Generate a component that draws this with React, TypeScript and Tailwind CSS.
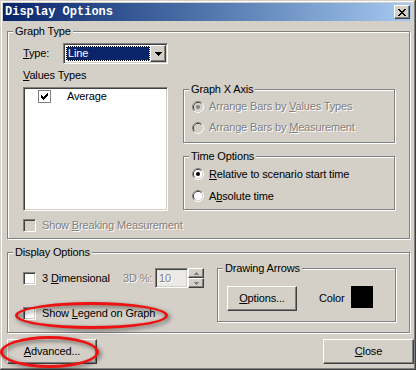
import React from "react";

const CHECK: [number, number][] = [
  [6, 0], [5, 1], [6, 1], [0, 2], [4, 2], [5, 2], [6, 2], [0, 3], [1, 3], [3, 3], [4, 3], [5, 3],
  [0, 4], [1, 4], [2, 4], [3, 4], [4, 4], [1, 5], [2, 5], [3, 5], [2, 6],
];

const XMARK: [number, number][] = [
  [0, 0], [1, 0], [6, 0], [7, 0], [1, 1], [2, 1], [5, 1], [6, 1], [2, 2], [3, 2], [4, 2], [5, 2],
  [3, 3], [4, 3], [2, 4], [3, 4], [4, 4], [5, 4], [1, 5], [2, 5], [5, 5], [6, 5], [0, 6], [1, 6], [6, 6], [7, 6],
];

function Pixels({ pts, w, h, color }: { pts: [number, number][]; w: number; h: number; color: string }) {
  return (
    <svg width={w} height={h} shapeRendering="crispEdges" className="block">
      {pts.map(([x, y], i) => (
        <rect key={i} x={x} y={y} width="1" height="1" fill={color} />
      ))}
    </svg>
  );
}

function CheckBox({ checked, disabled, flat }: { checked?: boolean; disabled?: boolean; flat?: boolean }) {
  const cls = flat
    ? "border border-[#808080] bg-white"
    : `border border-t-[#808080] border-l-[#808080] border-r-white border-b-white shadow-[inset_1px_1px_0_#404040,inset_-1px_-1px_0_#d4d0c8] ${
        disabled ? "bg-[#d4d0c8]" : "bg-white"
      }`;
  return (
    <div className={`w-[13px] h-[13px] shrink-0 flex items-center justify-center ${cls}`}>
      {checked && <Pixels pts={CHECK} w={7} h={7} color="#000" />}
    </div>
  );
}

function Radio({ checked, disabled }: { checked?: boolean; disabled?: boolean }) {
  const fill = disabled ? "#d4d0c8" : "#ffffff";
  const dot = disabled ? "#808080" : "#000000";
  return (
    <svg width="12" height="12" className="block shrink-0">
      <path d="M2.11 9.89 A5.5 5.5 0 0 1 9.89 2.11" stroke="#808080" fill="none" />
      <path d="M9.89 2.11 A5.5 5.5 0 0 1 2.11 9.89" stroke="#ffffff" fill="none" />
      <path d="M2.82 9.18 A4.5 4.5 0 0 1 9.18 2.82" stroke="#404040" fill="none" />
      <path d="M9.18 2.82 A4.5 4.5 0 0 1 2.82 9.18" stroke="#d4d0c8" fill="none" />
      <circle cx="6" cy="6" r="4" fill={fill} />
      {checked && <circle cx="6" cy="6" r="2" fill={dot} />}
    </svg>
  );
}

function GroupBox({
  label,
  className,
  children,
}: {
  label: string;
  className: string;
  children?: React.ReactNode;
}) {
  return (
    <div
      className={`relative border border-[#808080] shadow-[1px_1px_0_#fff,inset_1px_1px_0_#fff] ${className}`}
    >
      <span className="absolute -top-[7px] left-[5px] px-[2px] bg-[#d4d0c8] leading-[13px] whitespace-nowrap">
        {label}
      </span>
      {children}
    </div>
  );
}

const raised =
  "border border-t-white border-l-white border-r-[#404040] border-b-[#404040] shadow-[inset_-1px_-1px_0_#808080] bg-[#d4d0c8]";
const sunken =
  "border border-t-[#808080] border-l-[#808080] border-r-white border-b-white shadow-[inset_1px_1px_0_#404040,inset_-1px_-1px_0_#d4d0c8]";

const disabledText = "text-[#808080] text-shadow-[1px_1px_0_#fff]";

function Button({ children, className }: { children: React.ReactNode; className: string }) {
  return <div className={`flex items-center justify-center ${raised} ${className}`}>{children}</div>;
}

function Tri({ up, color }: { up?: boolean; color: string }) {
  return (
    <svg width="5" height="3" className="block" shapeRendering="crispEdges">
      {up ? (
        <>
          <rect x="2" y="0" width="1" height="1" fill={color} />
          <rect x="1" y="1" width="3" height="1" fill={color} />
          <rect x="0" y="2" width="5" height="1" fill={color} />
        </>
      ) : (
        <>
          <rect x="0" y="0" width="5" height="1" fill={color} />
          <rect x="1" y="1" width="3" height="1" fill={color} />
          <rect x="2" y="2" width="1" height="1" fill={color} />
        </>
      )}
    </svg>
  );
}

export default function App() {
  return (
    <div className="w-[416px] h-[370px] relative overflow-hidden bg-[#d4d0c8] text-black font-['Liberation_Sans',Arial,sans-serif] text-[11px] leading-[13px] tracking-[-0.15px] shadow-[inset_-1px_-1px_0_#404040,inset_1px_1px_0_#d4d0c8,inset_-2px_-2px_0_#808080,inset_2px_2px_0_#fff]">
      {/* Title bar */}
      <div className="mt-[3px] ml-[3px] w-[408px] h-[18px] flex items-center justify-between pl-[2px] bg-gradient-to-r from-[#0a246a] to-[#a6caf0]">
        <span className="font-['Liberation_Mono',monospace] font-bold text-[12px] tracking-normal text-white leading-[14px]">
          Display Options
        </span>
        <div className={`w-[16px] h-[14px] mr-[1px] flex items-center justify-center ${raised}`}>
          <Pixels pts={XMARK} w={8} h={7} color="#000" />
        </div>
      </div>

      {/* Graph Type */}
      <GroupBox label="Graph Type" className="mt-[10px] ml-[7px] w-[403px] h-[208px] pl-[15px] pt-[11px]">
        <div className="flex items-center h-[21px]">
          <span className="w-[40px]">
            <u>T</u>ype:
          </span>
          <div className={`w-[105px] h-[21px] bg-white flex items-start justify-between ${sunken}`}>
            <div className="ml-[2px] mt-[2px] w-[84px] h-[15px] bg-black border border-dotted border-[#fff]">
              <div className="w-full h-full bg-[#0a246a] text-white pl-[1px] leading-[13px]">Line</div>
            </div>
            <div className={`w-[16px] h-[17px] mt-[1px] mr-[1px] flex items-center justify-center ${raised}`}>
              <svg width="7" height="4" className="block" shapeRendering="crispEdges">
                <rect x="0" y="0" width="7" height="1" fill="#000" />
                <rect x="1" y="1" width="5" height="1" fill="#000" />
                <rect x="2" y="2" width="3" height="1" fill="#000" />
                <rect x="3" y="3" width="1" height="1" fill="#000" />
              </svg>
            </div>
          </div>
        </div>
        <div className="flex">
          <div className="w-[145px] flex flex-col">
            <span className="mt-[5px]">
              <u>V</u>alues Types
            </span>
            <div className={`mt-[5px] h-[124px] bg-white ${sunken}`}>
              <div className="flex items-center h-[13px] mt-[2px] pl-[14px]">
                <CheckBox checked flat />
                <span className="ml-[16px]">Average</span>
              </div>
            </div>
            <div className="mt-[8px] flex items-center h-[13px]">
              <CheckBox disabled />
              <span className={`ml-[6px] whitespace-nowrap ${disabledText}`}>
                Show <u>B</u>reaking Measurement
              </span>
            </div>
          </div>
          <div className="ml-[15px] w-[212px] flex flex-col mt-[25px]">
            <GroupBox label="Graph X Axis" className="h-[54px] pl-[8px] pt-[6px]">
              <div className="flex items-center h-[21px]">
                <Radio checked disabled />
                <span className={`ml-[5px] ${disabledText}`}>
                  Arrange Bars by <u>V</u>alues Types
                </span>
              </div>
              <div className="flex items-center h-[21px]">
                <Radio disabled />
                <span className={`ml-[5px] ${disabledText}`}>
                  Arrange Bars by <u>M</u>easurement
                </span>
              </div>
            </GroupBox>
            <GroupBox label="Time Options" className="mt-[13px] h-[54px] pl-[8px] pt-[6px]">
              <div className="flex items-center h-[22px]">
                <Radio checked />
                <span className="ml-[5px]">
                  <u>R</u>elative to scenario start time
                </span>
              </div>
              <div className="flex items-center h-[22px]">
                <Radio />
                <span className="ml-[5px]">
                  A<u>b</u>solute time
                </span>
              </div>
            </GroupBox>
          </div>
        </div>
      </GroupBox>

      {/* Display Options */}
      <GroupBox label="Display Options" className="mt-[13px] ml-[7px] w-[403px] h-[81px] pl-[15px] pt-[15px] flex">
        <div className="w-[181px] flex flex-col">
          <div className="flex items-center h-[20px]">
            <div className="w-[100px] flex items-center">
              <CheckBox />
              <span className="ml-[6px] whitespace-nowrap">
                3 <u>D</u>imensional
              </span>
            </div>
            <span className={`w-[32px] whitespace-nowrap ${disabledText}`}>3D %:</span>
            <div className={`w-[33px] h-[20px] bg-[#eceae6] flex items-center pl-[3px] ${sunken}`}>
              <span className={disabledText}>10</span>
            </div>
            <div className="w-[16px] h-[20px] flex flex-col">
              <div className={`h-[10px] flex items-center justify-center ${raised}`}>
                <Tri up color="#808080" />
              </div>
              <div className={`h-[10px] flex items-center justify-center ${raised}`}>
                <Tri color="#808080" />
              </div>
            </div>
          </div>
          <div className="mt-[19px] flex items-center h-[13px]">
            <CheckBox />
            <span className="ml-[6px] whitespace-nowrap">
              Show <u>L</u>egend on Graph
            </span>
          </div>
        </div>
        <GroupBox label="Drawing Arrows" className="ml-[13px] w-[179px] h-[54px] pl-[9px] pt-[17px] flex items-start">
          <Button className="w-[70px] h-[25px]">
            <span>
              <u>O</u>ptions...
            </span>
          </Button>
          <span className="ml-[22px] w-[32px] leading-[25px]">Color</span>
          <div className="w-[22px] h-[22px] bg-black" />
        </GroupBox>
      </GroupBox>

      {/* Bottom buttons */}
      <div className="mt-[6px] flex justify-between pl-[7px] pr-[2px]">
        <Button className="w-[90px] h-[25px]">
          <span>
            <u>A</u>dvanced...
          </span>
        </Button>
        <Button className="w-[91px] h-[25px]">
          <span>
            <u>C</u>lose
          </span>
        </Button>
      </div>

      {/* Red annotation ellipses */}
      <div className="absolute left-[15px] top-[302px] w-[153px] h-[27px] rounded-[50%] border-[3px] border-[#ee1111] drop-shadow-[2px_2px_2px_rgba(0,0,0,0.55)]" />
      <div className="absolute left-[0px] top-[336px] w-[99px] h-[32px] rounded-[50%] border-[3px] border-[#ee1111] drop-shadow-[2px_2px_2px_rgba(0,0,0,0.55)]" />
    </div>
  );
}
